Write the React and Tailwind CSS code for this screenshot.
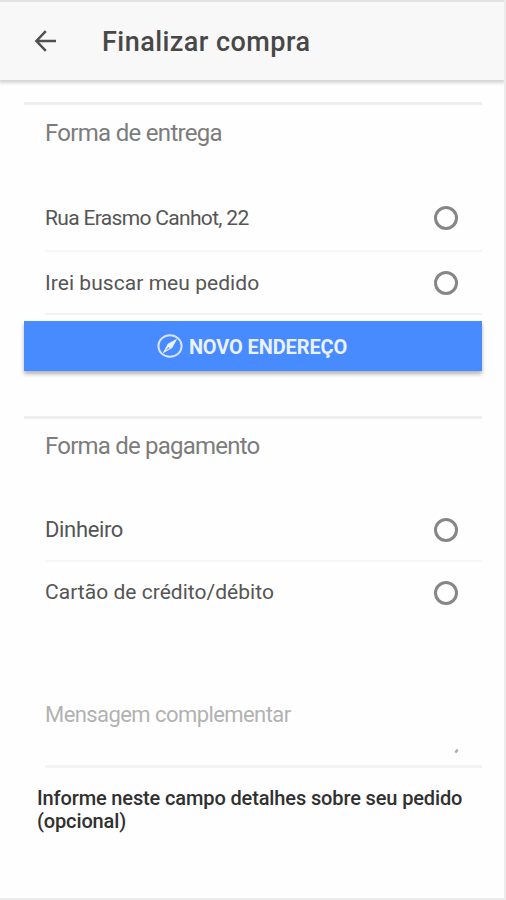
function Option({ label, className, textClass }) {
  return (
    <label className={`flex items-center justify-between ml-[21px] pr-[24px] ${className}`}>
      <span className={`whitespace-nowrap text-[#555] ${textClass}`}>{label}</span>
      <span className="size-[24px] shrink-0 rounded-full border-[3px] border-[#868686]" />
    </label>
  );
}

function BackArrow() {
  return (
    <svg className="w-[22px] h-[22px]" viewBox="0 0 22 22" fill="none" stroke="#505050" strokeWidth="2.5">
      <path d="M22 11H2.5M11.8 1.2L2.4 11L11.8 20.8" />
    </svg>
  );
}

function CompassIcon() {
  return (
    <svg className="w-[26px] h-[24px]" viewBox="0 0 26 24" fill="none">
      <ellipse cx="13" cy="12" rx="11.6" ry="10.8" stroke="#d6e4ff" strokeWidth="2" />
      <path d="M20.4 4.4L15.2 14L5.6 19.4L10.8 9.8Z" fill="#e9f1ff" />
      <path d="M11.6 12.8L8.4 16.6L12.6 14.2Z" fill="#6fa3ff" />
    </svg>
  );
}

export default function App() {
  return (
    <div className="flex h-[900px] w-[506px] flex-col overflow-hidden border-r-2 border-b-2 border-[#ececec] bg-[#fefefe] font-['Roboto',sans-serif]">
      <header className="flex h-[80px] shrink-0 items-center border-t-2 border-[#e2e2e2] bg-[#f8f8f8] pl-[34px] shadow-[0_2px_3px_1px_rgba(0,0,0,0.16)]">
        <BackArrow />
        <h1 className="ml-[46px] whitespace-nowrap pt-[2px] text-[27px] font-medium leading-[32px] tracking-[0.45px] text-[#484848]">Finalizar compra</h1>
      </header>
      <main className="flex flex-col pl-[24px] pr-[22px] pt-[22px]">
        <section className="flex flex-col border-t-[3px] border-[#efefef]">
          <h2 className="ml-[21px] h-[81px] whitespace-nowrap pt-[13px] text-[24px] leading-[30px] tracking-[-0.7px] text-[#7c7c7c]">Forma de entrega</h2>
          <Option label="Rua Erasmo Canhot, 22" className="h-[66px] border-b-2 border-[#f6f6f6]" textClass="pt-[2px] text-[21px] tracking-[-0.67px]" />
          <Option label="Irei buscar meu pedido" className="h-[63px] border-b-2 border-[#f3f1f1]" textClass="pt-[2px] text-[21px] tracking-[0.05px]" />
        </section>
        <button className="mt-[6px] flex h-[50px] items-center justify-center gap-[6px] bg-[#488aff] pr-[2px] text-[20px] font-bold text-[#eaf2ff] shadow-[0_3px_4px_rgba(0,0,0,0.3)]">
          <CompassIcon />
          <span className="whitespace-nowrap pt-[1px] tracking-[-0.13px]">NOVO ENDEREÇO</span>
        </button>
        <section className="mt-[45px] flex flex-col border-t-[3px] border-[#efefef]">
          <h2 className="ml-[21px] h-[80px] whitespace-nowrap pt-[12px] text-[24px] leading-[30px] tracking-[-0.78px] text-[#7c7c7c]">Forma de pagamento</h2>
          <Option label="Dinheiro" className="h-[63px] border-b-2 border-[#f7f7f7]" textClass="text-[22px] tracking-[-0.35px]" />
          <Option label="Cartão de crédito/débito" className="h-[62px]" textClass="text-[21px] tracking-[0.03px]" />
        </section>
        <div className="ml-[21px] mt-[74px] flex h-[70px] items-start justify-between border-b-[3px] border-[#f3f3f3] pr-[23px]">
          <span className="whitespace-nowrap pt-[3px] text-[22px] leading-[28px] tracking-[-0.57px] text-[#b2b2b2]">Mensagem complementar</span>
          <svg className="mt-[50px] h-[6px] w-[5px]" viewBox="0 0 5 6">
            <path d="M1.4 4.6L3.6 1.6" stroke="#a8a8a8" strokeWidth="2.4" />
          </svg>
        </div>
        <p className="ml-[13px] mt-[19px] whitespace-nowrap text-[20px] font-medium leading-[23px] tracking-[-0.13px] text-[#303030]">
          Informe neste campo detalhes sobre seu pedido
          <br />
          (opcional)
        </p>
      </main>
    </div>
  );
}
